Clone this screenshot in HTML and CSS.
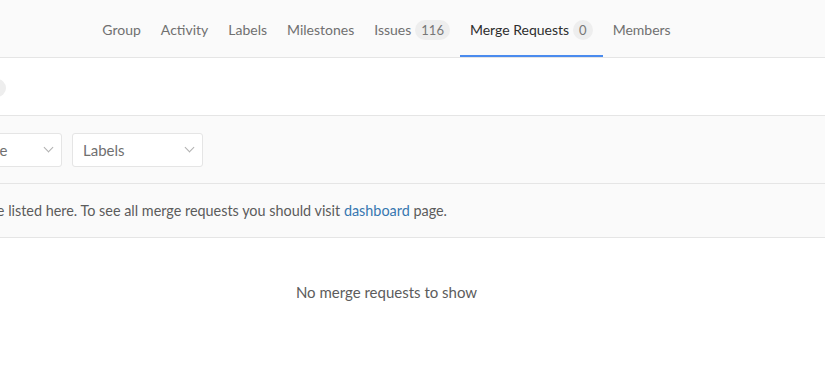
FILE: index.html
```html
<!DOCTYPE html>
<html lang="en">
<head>
  <meta charset="UTF-8" />
  <title>Merge Requests</title>
  <link rel="stylesheet" href="styles.css">
</head>
<body>

  <div class="nav-bar">
    <ul class="nav-links">
      <li><a href="#">Group</a></li>
      <li><a href="#">Activity</a></li>
      <li><a href="#">Labels</a></li>
      <li><a href="#">Milestones</a></li>
      <li><a href="#">Issues <span class="badge">116</span></a></li>
      <li class="active"><a href="#">Merge Requests <span class="badge">0</span></a></li>
      <li><a href="#">Members</a></li>
    </ul>
  </div>

  <div class="top-area">
    <span class="state-pill"></span>
  </div>

  <div class="filters">
    <div class="dropdown">Milestone <span class="caret"></span></div>
    <div class="dropdown">Labels <span class="caret"></span></div>
  </div>

  <div class="notice">
    <div class="notice-inner">
      <p class="notice-text">Only merge requests from this group are listed here. To see all merge requests you should visit <a href="#">dashboard</a> page.</p>
    </div>
  </div>

  <div class="empty-state">No merge requests to show</div>

</body>
</html>
```

FILE: styles.css
```css
body {
  margin: 0;
  font-family: 'Lato', 'Open Sans', sans-serif;
  font-size: 15px;
  color: #5c5c5c;
  background: #fff;
  overflow: hidden;
}

a {
  text-decoration: none;
}

.nav-bar {
  background: #fafafa;
  border-bottom: 1px solid #e5e5e5;
  height: 57px;
  font-size: 14px;
}

.nav-links {
  list-style: none;
  margin: 0;
  padding: 0;
  width: 773px;
  height: 57px;
  display: flex;
  justify-content: center;
}

.nav-links li {
  display: flex;
}

.nav-links a {
  display: flex;
  align-items: center;
  padding: 4px 10px 0;
  color: #707070;
  border-bottom: 2px solid transparent;
}

.nav-links .active a {
  color: #2e2e2e;
  border-bottom-color: #4a8bee;
}

.badge {
  display: inline-block;
  margin-left: 4px;
  padding: 2px 6px;
  border-radius: 10px;
  background: #eee;
  color: #777;
  font-size: 13px;
  line-height: 16px;
}

.top-area {
  height: 57px;
  border-bottom: 1px solid #e5e5e5;
  display: flex;
  align-items: center;
}

.state-pill {
  display: block;
  width: 40px;
  height: 18px;
  margin-left: -34px;
  margin-top: 2px;
  border-radius: 9px;
  background: #eee;
}

.filters {
  background: #fafafa;
  height: 67px;
  border-bottom: 1px solid #e5e5e5;
  display: flex;
  align-items: center;
  gap: 10px;
  margin-left: -69px;
}

.dropdown {
  box-sizing: border-box;
  width: 131px;
  height: 34px;
  padding: 0 9px 0 10px;
  background: #fff;
  border: 1px solid #e5e5e5;
  border-radius: 3px;
  color: #707070;
  display: flex;
  align-items: center;
  justify-content: space-between;
}

.caret {
  width: 6px;
  height: 6px;
  margin-top: -4px;
  border-right: 1.5px solid #b0b0b0;
  border-bottom: 1.5px solid #b0b0b0;
  transform: rotate(45deg);
}

.notice {
  background: #fafafa;
  height: 53px;
  border-bottom: 1px solid #e5e5e5;
  font-size: 14.4px;
}

.notice-inner {
  width: 447px;
  height: 100%;
  display: flex;
  align-items: center;
  justify-content: flex-end;
}

.notice-text {
  margin: 0;
  white-space: nowrap;
  flex-shrink: 0;
}

.notice-text a {
  color: #3777b0;
}

.empty-state {
  width: 773px;
  text-align: center;
  padding-top: 45px;
  color: #5c5c5c;
}
```
